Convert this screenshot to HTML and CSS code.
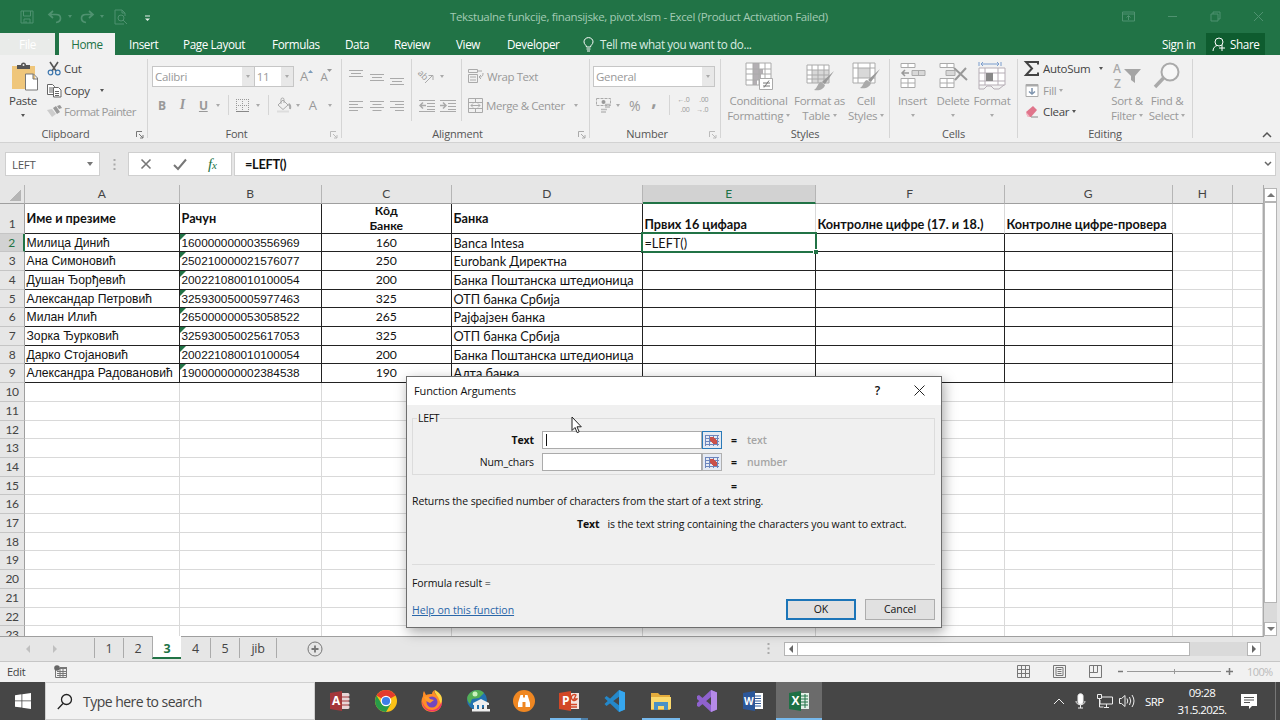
FILE: index.html
```html
<!DOCTYPE html>
<html lang="sr">
<head>
    <meta charset="UTF-8">
    <title>Tekstualne funkcije, finansijske, pivot.xlsm - Excel</title>
    <link rel="stylesheet" href="styles.css">
    <script src="script.js" defer></script>
</head>
<body>
<header class="titlebar">
    <div class="quick">
        <svg class="q-save" width="14" height="14" viewBox="0 0 14 14"><path d="M1 1h12v12H1zM3.500 1v5h7V1M4 13V9h6v4M6 13v-2"/></svg>
        <svg class="q-undo" width="14" height="14" viewBox="0 0 14 14"><path d="M5 1L1 4.500l4 3.500M1.500 4.500H8c6 0 6 7 0 8" stroke-width="1.700"/></svg>
        <i class="caret"></i>
        <svg class="q-redo" width="14" height="14" viewBox="0 0 14 14"><path d="M9 1l4 3.500L9 8M12.500 4.500H6c-6 0-6 7 0 8" stroke-width="1.700"/></svg>
        <i class="caret"></i>
        <svg class="q-preview" width="14" height="16" viewBox="0 0 14 16"><path d="M10 15H1V1h7l3 3v3M8 1v3h3"/><circle cx="7" cy="9" r="3"/><path d="M9 11l4 4"/></svg>
        <svg class="q-more" width="7" height="7" viewBox="0 0 7 7"><path d="M1 1h5"/><path d="M1 3.500h5L3.500 6z" class="solid"/></svg>
    </div>
    <div class="doc-title">Tekstualne funkcije, finansijske, pivot.xlsm - Excel (Product Activation Failed)</div>
    <div class="win-buttons">
        <svg width="13" height="11" viewBox="0 0 13 11"><path d="M.5 1h12v9H.5zM.5 3h12M6.500 9V5M4.500 6.500l2-2 2 2"/></svg>
        <svg width="11" height="11" viewBox="0 0 11 11"><path d="M1 5.500h9"/></svg>
        <svg width="11" height="11" viewBox="0 0 11 11"><path d="M1 3h7v7H1zM3 3V1h7v7H8"/></svg>
        <svg width="11" height="11" viewBox="0 0 11 11"><path d="M1 1l9 9M10 1l-9 9"/></svg>
    </div>
</header>

<nav class="tabs">
    <span class="tab-file">File</span>
    <span class="tab-home">Home</span>
    <span class="tab t-insert">Insert</span>
    <span class="tab t-layout">Page Layout</span>
    <span class="tab t-formulas">Formulas</span>
    <span class="tab t-data">Data</span>
    <span class="tab t-review">Review</span>
    <span class="tab t-view">View</span>
    <span class="tab t-dev">Developer</span>
    <span class="tell">
        <svg width="11" height="15" viewBox="0 0 11 15"><path d="M3.500 10c0-2-2.500-2.500-2.500-5.200a4.500 4.200 0 0 1 9 0C10 7.500 7.500 8 7.500 10zM3.500 12h4M4 14h3"/></svg>
        Tell me what you want to do...
    </span>
    <span class="signin">Sign in</span>
    <span class="share">
        <svg width="14" height="15" viewBox="0 0 14 15"><circle cx="7" cy="5" r="4"/><path d="M1 14c0-3 2-5 4-5.500M10 8v6M7 11h6"/></svg>
        Share
    </span>
</nav>

<section class="ribbon">
    <div class="group g-clipboard">
        <div class="group-body">
            <div class="paste">
                <svg width="28" height="29" viewBox="0 0 28 29"><path d="M1 4h23v23H1z" fill="#efc67b"/><path d="M6 3h4a2.500 2.500 0 0 1 5 0h4v4H6z" fill="#555"/><circle cx="12.500" cy="3" r="1" fill="#eee"/><path d="M14.500 12h8l4 4v12h-12zM22 12v5h5" fill="#fff" stroke="#777"/></svg>
                <span>Paste</span>
                <i class="caret dark"></i>
            </div>
            <div class="clip-list">
                <div class="tool on"><svg width="15" height="15" viewBox="0 0 15 15" fill="none"><path d="M3 1l6 9M11 1L5 10" stroke="#555" stroke-width="1.600"/><circle cx="3.500" cy="11.500" r="2.300" stroke="#3c76ae" stroke-width="1.200"/><circle cx="10.800" cy="11.500" r="2.300" stroke="#3c76ae" stroke-width="1.200"/></svg><span>Cut</span></div>
                <div class="tool on"><svg width="15" height="15" viewBox="0 0 15 15" fill="#fff" stroke="#666"><path d="M.5 1.500h5l2 2v8h-7zM2 5h4M2 7h4M2 9h4"/><path d="M6.500 4.500h5l2.500 2.500v7H6.500zM8 8.500h4M8 10.500h4M8 12.500h4"/></svg><span>Copy</span><i class="caret dark"></i></div>
                <div class="tool"><svg width="15" height="13" viewBox="0 0 15 13"><path d="M0 5l5-1 4 5-4 3z" fill="#ccc"/><path d="M6 3l3-2 4 6-3 2zM10 1l3-1 2 3-3 1z" fill="#999"/></svg><span class="s-painter">Format Painter</span></div>
            </div>
        </div>
        <div class="group-name">Clipboard<svg class="launch on" width="8" height="8" viewBox="0 0 8 8"><path d="M.5 6V.5H6M3 3l4 4M7 4v3H4"/></svg></div>
    </div>

    <div class="group g-font">
        <div class="group-body">
            <div class="font-row1">
                <span class="combo c-name">Calibri<b><i class="caret"></i></b></span>
                <span class="combo c-size">11<b><i class="caret"></i></b></span>
                <span class="grow">A<svg width="5" height="4" viewBox="0 0 5 4"><path d="M0 4h5L2.500 1z" fill="#7b9dbd"/></svg></span>
                <span class="grow small">A<svg width="5" height="4" viewBox="0 0 5 4"><path d="M0 0h5L2.500 3z" fill="#999"/></svg></span>
            </div>
            <div class="font-row2">
                <b class="f-b">B</b><i class="f-i">I</i><u class="f-u">U</u><i class="caret"></i><i class="vsep"></i>
                <svg class="f-border" width="13" height="13" viewBox="0 0 13 13"><path d="M.5 0v12M6.500 0v12M12.500 0v12M0 .5h13M0 6.500h13" stroke="#999" stroke-dasharray="1 1"/><path d="M0 12.500h13" stroke="#888"/></svg>
                <i class="caret"></i><i class="vsep v2"></i>
                <svg class="f-fill" width="16" height="15" viewBox="0 0 16 15" fill="none" stroke="#aaa"><path d="M7 2l5 5-5 4.500L2 7zM5 6V1.500a1.500 1.500 0 0 1 3 0V5"/><path d="M12.500 6c2 1 2 3 1.500 5" stroke-width="2"/><path d="M1 13.500h12" stroke="#ddd" stroke-width="2"/></svg>
                <i class="caret"></i><span class="f-a">A</span><i class="caret"></i>
            </div>
        </div>
        <div class="group-name">Font<svg class="launch" width="8" height="8" viewBox="0 0 8 8"><path d="M.5 6V.5H6M3 3l4 4M7 4v3H4"/></svg></div>
    </div>

    <div class="group g-align">
        <div class="group-body">
            <div class="al-grid">
                <svg width="14" height="18" viewBox="0 0 14 18"><path d="M0 2.500h14M2 5.500h10M0 8.500h14"/></svg>
                <svg width="14" height="18" viewBox="0 0 14 18"><path d="M0 6.500h14M2 9.500h10M0 12.500h14"/></svg>
                <svg width="14" height="18" viewBox="0 0 14 18"><path d="M0 10.500h14M2 13.500h10M0 16.500h14"/></svg>
                <svg width="14" height="14" viewBox="0 0 14 14"><path d="M0 2.500h14M0 5.500h9M0 8.500h14M0 11.500h9"/></svg>
                <svg width="14" height="14" viewBox="0 0 14 14"><path d="M0 2.500h14M2.500 5.500h9M0 8.500h14M2.500 11.500h9"/></svg>
                <svg width="14" height="14" viewBox="0 0 14 14"><path d="M0 2.500h14M5 5.500h9M0 8.500h14M5 11.500h9"/></svg>
            </div>
            <div class="al-grid al-mid">
                <svg width="16" height="16" viewBox="0 0 16 16"><text x="-1" y="9" transform="rotate(45 4 6)" class="ab">ab</text><path d="M6 14l7-7M9.500 6.500H14V11"/></svg>
                <i class="caret"></i>
                <svg width="16" height="14" viewBox="0 0 16 14"><path d="M0 1.500h16M8 4.500h8M8 7.500h8M8 10.500h8M0 12.500h16"/><path d="M7 6.500H1M4 3.500l-3 3 3 3" stroke-width="1.500"/></svg>
                <svg width="16" height="14" viewBox="0 0 16 14"><path d="M0 1.500h16M8 4.500h8M8 7.500h8M8 10.500h8M0 12.500h16"/><path d="M0 6.500h6M3 3.500l3 3-3 3" stroke-width="1.500"/></svg>
            </div>
            <div class="al-text">
                <div class="tool"><svg width="16" height="16" viewBox="0 0 16 16"><path d="M.5 1.500h9v3h-9zM9 3h5M.5 6.500h9v8h-9zM2 9h6M2 12h6M15 5c0 4-2 4-4 4M13 7l-2 2 2 2"/></svg><span class="s-wrap">Wrap Text</span></div>
                <div class="tool"><svg width="15" height="15" viewBox="0 0 15 15"><path d="M.5.5h14v14H.5zM.5 4.500h14M.5 10.500h14M7.500.5v4M7.500 10.500v4M3 7.500h9M5 5.500l-2 2 2 2M10 5.500l2 2-2 2"/></svg><span class="s-merge">Merge &amp; Center</span><i class="caret"></i></div>
            </div>
        </div>
        <div class="group-name">Alignment<svg class="launch" width="8" height="8" viewBox="0 0 8 8"><path d="M.5 6V.5H6M3 3l4 4M7 4v3H4"/></svg></div>
    </div>

    <div class="group g-number">
        <div class="group-body">
            <span class="combo c-format">General<b><i class="caret"></i></b></span>
            <div class="num-row">
                <svg width="16" height="16" viewBox="0 0 16 16"><path d="M.5 1.500h14v7H.5z" fill="none" stroke="#aaa" stroke-dasharray="3 1"/><circle cx="7.500" cy="5" r="2" fill="#999"/><path d="M9 7.500h5M9 10h5M5 12.500h6M5 15h5" stroke="#bbb" stroke-width="1.500"/></svg>
                <i class="caret"></i><span class="pct">%</span><span class="comma">,</span><i class="vsep"></i>
                <span class="dec">&#8592;.0<br>.00</span><span class="dec">.00<br>&#8594;.0</span>
            </div>
        </div>
        <div class="group-name">Number<svg class="launch" width="8" height="8" viewBox="0 0 8 8"><path d="M.5 6V.5H6M3 3l4 4M7 4v3H4"/></svg></div>
    </div>

    <div class="group g-styles">
        <div class="group-body">
            <div class="big b-cond"><svg width="28" height="29" viewBox="0 0 28 29"><path d="M1 1h25v22H1z" fill="#fff"/><path d="M8 1h6v6H8zM8 7h10v5H8zM8 12h8v6H8zM8 18h4v5H8z" fill="#b3afb3"/><path d="M1 1h25v22H1zM8 1v22M14 1v22M20 1v22M1 7h25M1 12h25M1 18h25" fill="none" stroke="#aaa"/><path d="M14.500 16.500h13v11h-13z" fill="#fff" stroke="#aaa"/><path d="M18 21h7M18 24h7M24 18.500l-5 7" stroke="#777"/></svg><span>Conditional<br>Formatting <i class="caret"></i></span></div>
            <div class="big b-table"><svg width="28" height="29" viewBox="0 0 28 29"><path d="M1 3h22v18H1z" fill="#fff"/><path d="M6 8h17v13H6z" fill="#d8d8d8"/><path d="M1 3h22v18H1zM6 3v18M12 3v18M18 3v18M1 8h22M1 13h22M1 17h22" fill="none" stroke="#aaa"/><path d="M28 9l-9 13-3-2z" fill="#999"/><path d="M15 20l4 3c-1 4-5 6-11 5 4-2 3-7 7-8z" fill="#aaa"/></svg><span>Format as<br>Table <i class="caret"></i></span></div>
            <div class="big b-cell"><svg width="28" height="29" viewBox="0 0 28 29"><path d="M1 1h22v20H1z" fill="#fff"/><path d="M6 6h12v10H6z" fill="#d8d8d8"/><path d="M1 1h22v20H1zM6 1v20M18 1v20M1 6h22M1 16h22" fill="none" stroke="#aaa"/><path d="M28 7l-9 13-3-2z" fill="#999"/><path d="M15 18l4 3c-1 4-5 6-11 5 4-2 3-7 7-8z" fill="#aaa"/></svg><span>Cell<br>Styles <i class="caret"></i></span></div>
        </div>
        <div class="group-name">Styles</div>
    </div>

    <div class="group g-cells">
        <div class="group-body">
            <div class="big b-ins"><svg width="28" height="29" viewBox="0 0 28 29" fill="#fff" stroke="#aaa"><path d="M2 1.500h14v4H2zM9 1.500v4M2 16.500h14v9H2zM9 16.500v9M2 21h14"/><path d="M13 8.500h13v5H13zM19.500 8.500v5" fill="#d8d8d8"/><path d="M10 11H3M6 8l-3 3 3 3" fill="none" stroke="#999" stroke-width="1.500"/></svg><span>Insert</span><i class="caret"></i></div>
            <div class="big b-del"><svg width="28" height="29" viewBox="0 0 28 29" fill="#fff" stroke="#aaa"><path d="M1 1.500h14v4H1zM8 1.500v4M1 16.500h14v9H1zM8 16.500v9M1 21h14"/><path d="M7 8.500h9v5H7z" fill="#d8d8d8"/><path d="M15 6l13 12M27 6L16 18" fill="none" stroke="#999" stroke-width="2"/></svg><span>Delete</span><i class="caret"></i></div>
            <div class="big b-fmt"><svg width="28" height="29" viewBox="0 0 28 29" fill="none" stroke="#b5adb5"><path d="M1 0v4M23 0v4M3 2h18M5 0L3 2l2 2M19 0l2 2-2 2" stroke="#7b9dcd"/><path d="M1 6h26v17H1zM7 6v17M20 6v17M1 11h26M1 19h26" fill="#fff"/><path d="M8 11h7v8H8z" fill="#888" stroke="none"/><path d="M1 23v4h5l3-3h4l3 3h5l5-4"/></svg><span>Format</span><i class="caret"></i></div>
        </div>
        <div class="group-name">Cells</div>
    </div>

    <div class="group g-editing">
        <div class="group-body">
            <div class="edit-list">
                <div class="tool on"><svg width="14" height="15" viewBox="0 0 14 15"><path d="M13 3.500V1H1l6 6.500L1 14h12v-2.500" fill="none" stroke="#444" stroke-width="2"/></svg><span class="s-sum">AutoSum</span><i class="caret dark"></i></div>
                <div class="tool"><svg width="14" height="15" viewBox="0 0 14 15"><path d="M1 1.500h12v12H1z" fill="#fff" stroke="#aaa"/><path d="M1 2.500h12" stroke="#aaa" stroke-width="2"/><path d="M7 5v6M4 8.500L7 11l3-2.500" fill="none" stroke="#7d93ad" stroke-width="1.500"/></svg><span class="s-fill">Fill</span><i class="caret"></i></div>
                <div class="tool on"><svg width="14" height="13" viewBox="0 0 14 13"><path d="M1 7l7-6 4 4-6 7H3z" fill="#e0758b"/><path d="M1 7l4 4.500-1 .5H3L1 9z" fill="#f3b8c4"/><path d="M6 12h7" stroke="#888"/></svg><span class="s-clear">Clear</span><i class="caret dark"></i></div>
            </div>
            <div class="big b-sort"><svg width="28" height="29" viewBox="0 0 28 29"><path d="M11 7h17l-6 7v7l-4-3v-4z" fill="#a5a5a5"/><text x="0" y="11" class="az">A</text><text x="1" y="26" class="az">Z</text></svg><span>Sort &amp;<br>Filter <i class="caret"></i></span></div>
            <div class="big b-find"><svg width="28" height="29" viewBox="0 0 28 29"><circle cx="17" cy="10" r="8.500" fill="#f7f7f7" stroke="#aaa" stroke-width="2"/><path d="M10.500 16L2 25" stroke="#aaa" stroke-width="3.500"/></svg><span>Find &amp;<br>Select <i class="caret"></i></span></div>
        </div>
        <div class="group-name">Editing</div>
    </div>
    <svg class="collapse" width="10" height="6" viewBox="0 0 10 6"><path d="M1 5l4-4 4 4"/></svg>
</section>

<section class="formula-bar">
    <div class="name-box">LEFT<i class="caret"></i></div>
    <svg class="grip" width="3" height="13" viewBox="0 0 3 13"><path d="M1.500 1v11"/></svg>
    <div class="fx-box">
        <svg width="12" height="12" viewBox="0 0 12 12"><path d="M1.500 1.500l9 9M10.500 1.500l-9 9" stroke-width="1.600"/></svg>
        <svg width="14" height="12" viewBox="0 0 14 12"><path d="M1 7l4 4 8-9.500" stroke-width="2"/></svg>
        <span class="fx">f<small>x</small></span>
    </div>
    <div class="formula">=LEFT()<svg width="8" height="6" viewBox="0 0 8 6"><path d="M1 1l3 3 3-3"/></svg></div>
</section>

<main class="workspace">
    <div class="sheet">
        <div class="row heads">
            <span class="corner"></span>
            <span>A</span><span>B</span><span>C</span><span>D</span><span class="active">E</span><span>F</span><span>G</span><span>H</span><span></span>
        </div>
        <div class="rows" id="rows"></div>
    </div>
    <div class="vscroll">
        <div class="sb-btn"><i class="tri up"></i></div>
        <div class="v-thumb"></div>
        <div class="v-track"></div>
        <div class="sb-btn"><i class="tri down"></i></div>
    </div>
</main>

<section class="sheet-tabs">
    <i class="tri left nav1"></i><i class="tri right nav2"></i>
    <div class="tab-list">
        <span>1</span><span>2</span><span class="current">3</span><span>4</span><span>5</span><span class="wide">jib</span>
    </div>
    <svg class="add" width="16" height="16" viewBox="0 0 16 16"><circle cx="8" cy="8" r="7"/><path d="M8 4.500v7M4.500 8h7" stroke-width="1.800"/></svg>
    <svg class="grip" width="3" height="13" viewBox="0 0 3 13"><path d="M1.500 1v11"/></svg>
    <div class="hscroll">
        <div class="sb-btn"><i class="tri left"></i></div>
        <div class="h-thumb"></div>
        <div class="h-track"></div>
        <div class="sb-btn"><i class="tri right"></i></div>
    </div>
</section>

<footer class="status">
    <span class="mode">Edit</span>
    <svg class="macro" width="14" height="13" viewBox="0 0 14 13"><path d="M1.500 3.500h11v9h-11zM3 6.500h9M3 8.500h9M3 10.500h9M6 4v8M9 4v8" fill="none" stroke="#777"/><circle cx="3" cy="3" r="2.800" fill="#666"/><path d="M6 3h7" stroke="#777" stroke-width="2"/></svg>
    <div class="views">
        <svg width="13" height="13" viewBox="0 0 13 13"><path d="M.5.5h12v12H.5zM4.500.5v12M8.500.5v12M.5 4.500h12M.5 8.500h12"/></svg>
        <svg width="13" height="13" viewBox="0 0 13 13"><path d="M.5.5h12v12H.5zM3 2.500h7v8H3zM4.500 4.500h4M4.500 6.500h4M4.500 8.500h4"/></svg>
        <svg width="13" height="13" viewBox="0 0 13 13"><path d="M.5.5h12v12H.5zM4.500.5v7M8.500.5v7M.5 7.500h8"/></svg>
    </div>
    <svg class="zoomer" width="116" height="9" viewBox="0 0 116 9"><path d="M1 4.500h5M109 4.500h7M112.500 1v7" stroke-width="1.500"/><path d="M10 4.500h94M57.500 2v5" stroke="#999"/></svg>
    <span class="zoom">100%</span>
</footer>

<section class="taskbar">
    <div class="start"><svg width="16" height="16" viewBox="0 0 16 16"><path d="M0 2.300l6.500-1v6.200H0zM7.300 1.200L16 0v7.500H7.300zM0 8.300h6.500v6.300L0 13.700zM7.300 8.300H16V16l-8.700-1.300z" fill="#fff"/></svg></div>
    <div class="search"><svg width="16" height="17" viewBox="0 0 16 17"><circle cx="9.500" cy="6.500" r="5"/><path d="M6 10.500L.8 16"/></svg><span>Type here to search</span></div>
    <div class="apps">
        <div><svg width="22" height="22" viewBox="0 0 22 22"><path d="M11 3h8c2 0 2 4 0 4 2 0 2 4 0 4 2 0 2 4 0 4 2 0 2 4 0 4h-8z" fill="#e8d5d6"/><path d="M12 7h8M12 11h8M12 15h8" stroke="#a4373a"/><path d="M1 3l12-2v20L1 19z" fill="#a4373a"/><text x="3" y="15" class="logo">A</text></svg></div>
        <div><svg width="22" height="22" viewBox="0 0 22 22"><circle cx="11" cy="11" r="11" fill="#fbc116"/><path d="M11 11L1.500 5.500A11 11 0 0 1 20.500 5.500z" fill="#e33b2e"/><path d="M1.500 5.500A11 11 0 0 0 11 22l5-8.500-5 2-4.500-2z" fill="#289b48"/><path d="M11 6h9.800L20.500 5.500H11z" fill="#e33b2e"/><circle cx="11" cy="11" r="5.300" fill="#fff"/><circle cx="11" cy="11" r="4.100" fill="#3d7ee8"/></svg></div>
        <div><svg width="22" height="22" viewBox="0 0 22 22"><path d="M14 0c-1 3 0 4 3 6l1-1c4 5 5 16-7 17C2 22-2 13 2 6c0-2 0-3 1-5l2 4c2-1 4-1 6-1 0-2 1-3 3-4z" fill="#ff8d26"/><path d="M1 11c1 15 21 13 20 0-2 5-5 9-10 9S3 17 1 11z" fill="#f0346a"/><path d="M14 0c-1 3 1 4 3 7l3 7c3-7-1-11-6-14z" fill="#ffd545"/><circle cx="11" cy="12" r="5.500" fill="#7447bd"/><path d="M3 7c3-1 5 0 6 2l4 1-4 3c-3-1-5-3-6-6z" fill="#ff9c2b"/></svg></div>
        <div><svg width="24" height="22" viewBox="0 0 24 22"><circle cx="11" cy="10" r="10" fill="#2272b0"/><path d="M3 4c4-5 12-5 15-1l-5 5-7 1-2 5C1 11 0 7 3 4z" fill="#54af55"/><circle cx="9" cy="4" r="2.500" fill="#c9f3bd"/><path d="M7 13l8-4 8 4v2H7zM8 15h3v5H8zM13 15h3v5h-3zM18 15h3v5h-3zM6 19h18v2.500H6z" fill="#eee"/></svg></div>
        <div><svg width="22" height="22" viewBox="0 0 22 22"><circle cx="11" cy="11" r="11" fill="#ef8722"/><path d="M7.500 5H10v2.500h2V5h2.500L17 13v4h-4.500v-5h-3v5H5v-4z" fill="#fff"/></svg></div>
        <div class="running stacked"><svg width="22" height="22" viewBox="0 0 22 22"><path d="M12 3h9v16h-9z" fill="#f4e3dc"/><path d="M13 14.500h6M13 17h6M18 5a3 3 0 1 0 1 4h-3z" fill="none" stroke="#d24726" stroke-width="1.300"/><path d="M1 3l12-2v20L1 19z" fill="#d24726"/><text x="4" y="15" class="logo">P</text></svg></div>
        <div><svg width="22" height="22" viewBox="0 0 22 22"><path d="M15 0l6 2.500v17L15 22 .5 8l2-2L16 16V6L2.500 16l-2-2z" fill="#2488ca"/><path d="M15 0l6 2.500v17L15 22z" fill="#36a6ee"/></svg></div>
        <div class="running"><svg width="22" height="20" viewBox="0 0 22 20"><path d="M1 2h7l2 2h10v15H1z" fill="#e4ac3c"/><path d="M1 6h20v12H1z" fill="#fbd96d"/><path d="M4 11h14v8h-4v-4H8v4H4z" fill="#4a91c5"/></svg></div>
        <div><svg width="22" height="22" viewBox="0 0 22 22"><path d="M15 0l6 2.500v17L15 22 1 9V6l2-1 12 10V7L3 17l-2-1v-3z" fill="#8f62ce"/><path d="M15 0l6 2.500v17L15 22z" fill="#b58ae8"/></svg></div>
        <div><svg width="22" height="22" viewBox="0 0 22 22"><path d="M12 3h9v16h-9z" fill="#fff"/><path d="M13 6h6M13 8.500h6M13 11h6M13 13.500h6M13 16h6" stroke="#2b579a"/><path d="M1 3l12-2v20L1 19z" fill="#2b579a"/><text x="2" y="15" class="logo w">W</text></svg></div>
        <div class="running current"><svg width="22" height="22" viewBox="0 0 22 22"><path d="M12 3h9v16h-9z" fill="#e4f0e8"/><path d="M13 6h7M13 9h7M13 12h7M13 15h7M17 4v14" stroke="#217346"/><path d="M1 3l12-2v20L1 19z" fill="#1e7145"/><text x="3.500" y="15" class="logo">X</text></svg></div>
    </div>
    <div class="tray">
        <svg class="t-up" width="12" height="7" viewBox="0 0 12 7"><path d="M1 6l5-5 5 5"/></svg>
        <svg class="t-mic" width="11" height="16" viewBox="0 0 11 16"><path d="M3 3c0-3 5-3 5 0v6c0 3-5 3-5 0z" fill="#fff"/><path d="M1 8c0 5 9 5 9 0M5.500 12v3M3 15h5"/></svg>
        <svg class="t-net" width="16" height="15" viewBox="0 0 16 15"><path d="M5 3h10.500v7H3V6M7 13.500h5M9.500 10v3M.5.500h4v4h-4zM2.500 5v8h4"/></svg>
        <svg class="t-vol" width="17" height="14" viewBox="0 0 17 14"><path d="M.5 4.500h2l3.500-3v11l-3.500-3h-2zM8 4.500q1.500 2.500 0 5M10.500 3q2.500 4 0 8M13 1q4 6 0 12"/></svg>
        <span class="lang">SRP</span>
        <div class="clock">09:28<br>31.5.2025.</div>
        <svg class="t-note" width="16" height="15" viewBox="0 0 16 15"><path d="M0 0h16v12h-5l-3 3v-3H0z" fill="#fff" stroke="none"/><path d="M3 3.500h10M3 6h10M3 8.500h6" stroke="#555"/></svg>
        <i class="peek"></i>
    </div>
</section>

<div class="dialog">
    <div class="dlg-title"><span>Function Arguments</span><b>?</b><svg width="11" height="11" viewBox="0 0 11 11"><path d="M.5.5l10 10M10.500.5l-10 10"/></svg></div>
    <div class="dlg-body">
        <fieldset class="args">
            <legend>LEFT</legend>
            <div class="arg focus"><label class="strong">Text</label><span class="field"><i class="cursor"></i></span><span class="pick"></span><b>=</b><span class="hint h-text">text</span></div>
            <div class="arg"><label class="l-num">Num_chars</label><span class="field"></span><span class="pick"></span><b>=</b><span class="hint h-num">number</span></div>
        </fieldset>
        <div class="result">=</div>
        <p class="about">Returns the specified number of characters from the start of a text string.</p>
        <p class="arg-about"><b>Text</b><span>is the text string containing the characters you want to extract.</span></p>
        <p class="formula-result">Formula result =</p>
        <div class="dlg-foot">
            <a class="help">Help on this function</a>
            <span class="btn ok">OK</span>
            <span class="btn">Cancel</span>
        </div>
    </div>
</div>
<svg class="pointer" width="12" height="18" viewBox="0 0 12 18"><path d="M1 1v13.500l3-3 2.200 5.200 2-.9L6 10.800h4.300z" fill="#fff" stroke="#222"/></svg>
</body>
</html>
```
FILE: styles.css
```css
* {
    box-sizing: border-box;
}

body {
    margin: 0;
    width: 1280px;
    height: 720px;
    overflow: hidden;
    position: relative;
    background: #e6e6e6;
    font-family: "Open Sans", "Noto Sans", sans-serif;
    font-size: 11.5px;
    letter-spacing: -0.3px;
    color: #444;
}

svg {
    display: block;
    flex: none;
    overflow: visible;
}

.caret {
    display: inline-block;
    flex: none;
    width: 0;
    height: 0;
    border: 2.5px solid transparent;
    border-top: 3px solid #aaa;
    border-bottom: 0;
}

.caret.dark {
    border-top-color: #555;
}

/* title bar */
.titlebar {
    height: 33px;
    display: flex;
    align-items: center;
    background: #217346;
}

.titlebar svg {
    fill: none;
    stroke: #4f9270;
}

.quick {
    width: 450px;
    padding-left: 20px;
    display: flex;
    align-items: center;
    height: 29px;
}

.quick .caret { border-top-color: #4f9270; }
.q-undo { margin-left: 14px; }
.q-undo + .caret { margin-left: 6px; }
.q-redo { margin-left: 8px; }
.q-redo + .caret { margin-left: 6px; }
.quick .q-preview { margin-left: 10px; }
.quick .q-more { margin: 3px 0 0 16px; stroke: #e5f0ea; }
.q-more .solid { fill: #e5f0ea; stroke: none; }

.doc-title {
    color: #a3cbb4;
    width: 672px;
    white-space: nowrap;
    font-size: 11.5px;
    letter-spacing: -0.35px;
}

.win-buttons {
    display: flex;
    gap: 32px;
    align-items: center;
    height: 29px;
}

/* ribbon tabs */
.tabs {
    height: 22px;
    display: flex;
    background: #217346;
    color: #fff;
    line-height: 22px;
    font-size: 11.7px;
    letter-spacing: -0.38px;
    white-space: nowrap;
}

.tab-file {
    width: 55px;
    background: #e9ebe9;
    text-align: center;
    color: #fff;
}

.tab-home {
    width: 56px;
    margin-left: 4px;
    background: #f1f1f1;
    color: #217346;
    text-align: center;
}

.t-insert { width: 54px; margin-left: 14px; }
.t-layout { width: 89px; }
.t-formulas { width: 73px; }
.t-data { width: 49px; }
.t-review { width: 62px; }
.t-view { width: 51px; }
.t-dev { width: 76px; }

.tell {
    width: 579px;
    display: flex;
    gap: 6px;
    align-items: center;
    color: #d9ebe1;
}

.tabs svg { fill: none; stroke: #fff; }

.signin { width: 44px; }

.share {
    display: flex;
    align-items: center;
    gap: 4px;
    background: #0e5c2f;
    width: 59px;
    padding-left: 6px;
}

/* ribbon */
.ribbon {
    height: 88px;
    display: flex;
    background: #f1f1f1;
    border-bottom: 1px solid #d2d2d2;
    color: #999;
}

.group {
    display: flex;
    flex-direction: column;
    margin: 4px 0;
    border-right: 1px solid #d5d5d5;
    flex: none;
}

.g-clipboard { width: 148px; }
.g-font { width: 194px; }
.g-align { width: 248px; }
.g-number { width: 131px; }
.g-styles { width: 169px; }
.g-cells { width: 128px; }
.g-editing { width: 175px; }

.group-body {
    height: 67px;
    display: flex;
    flex: none;
}

.group-name {
    position: relative;
    height: 12px;
    line-height: 16px;
    text-align: center;
    color: #555;
    font-size: 11px;
    letter-spacing: -0.2px;
    padding-right: 16px;
}

.g-styles .group-name, .g-cells .group-name, .g-editing .group-name {
    padding-right: 0;
}

.launch {
    position: absolute;
    right: 3px;
    top: 5px;
    fill: none;
    stroke: #bbb;
}

.launch.on { stroke: #777; }

.tool {
    display: flex;
    align-items: center;
    white-space: nowrap;
    height: 22px;
}

.tool.on { color: #444; }
.s-painter { letter-spacing: -0.6px; }

.paste {
    width: 46px;
    padding: 3px 0 0 0;
    display: flex;
    flex-direction: column;
    align-items: center;
    color: #444;
    line-height: 17px;
}

.paste svg { margin-left: 3px; }
.paste span { margin-top: 1px; }
.paste .caret { margin-top: 5px; }

.clip-list { padding: 0 0 0 1px; margin-top: -1px; }
.clip-list .tool { gap: 2px; height: 21.5px; }
.clip-list .caret { margin-left: 8px; }

.g-font .group-body, .g-number .group-body {
    flex-direction: column;
}

.combo {
    display: flex;
    align-items: center;
    justify-content: space-between;
    height: 21px;
    border: 1px solid #c6c6c6;
    background: #fff;
    padding-left: 2px;
    color: #999;
    line-height: 19px;
}

.combo b {
    width: 12px;
    align-self: stretch;
    background: #e8e8e8;
    display: flex;
    align-items: center;
    justify-content: center;
}

.c-name { width: 105px; }
.c-size { width: 41px; margin-left: -1px; }

.font-row1 {
    display: flex;
    padding: 7px 0 0 4px;
}

.grow {
    display: flex;
    width: 21px;
    margin-left: 6px;
    font-size: 13px;
    line-height: 21px;
}

.grow.small { font-size: 11.5px; margin-left: 0; }
.grow svg { margin-top: 3px; }

.font-row2 {
    display: flex;
    align-items: center;
    height: 22px;
    margin-top: 7px;
    padding-left: 10px;
    font-size: 12px;
}

.f-i { margin-left: 14px; font-family: "Liberation Serif", serif; font-size: 14px; font-weight: bold; }
.f-u { margin-left: 14px; font-weight: bold; }
.f-u + .caret { margin-left: 8px; }

.vsep {
    width: 1px;
    height: 20px;
    background: #d5d5d5;
    margin-left: 8px;
}

.f-border { margin-left: 7px; }
.f-border + .caret { margin-left: 7px; }
.f-fill { margin-left: 7px; }
.f-fill + .caret { margin-left: 4px; }
.f-a { margin: 0 11px 0 9px; font-size: 13px; }

/* alignment */
.g-align svg {
    fill: none;
    stroke: #aaa;
}

.al-grid {
    display: grid;
    grid-template-columns: 20.6px 20.6px 20.6px;
    grid-template-rows: 29px 29px;
    align-items: center;
    padding: 3px 0 0 7px;
    width: 69px;
    height: 62px;
}

.al-mid {
    grid-template-columns: 21px 21px;
    width: 51px;
    margin-left: 0;
    padding-left: 7px;
    border: solid #d5d5d5;
    border-width: 0 1px;
}

.ab {
    font-size: 9px;
    fill: #999;
    stroke: none;
}

.al-text { padding: 6px 0 0 6px; }
.al-text .tool { gap: 3px; height: 22px; }
.al-text .tool + .tool { margin-top: 7px; }
.s-wrap, .s-merge { letter-spacing: -0.42px; }
.al-text .caret { margin-left: 6px; }

/* number */
.c-format { width: 122px; margin: 7px 0 0 3px; flex: none; }

.num-row {
    display: flex;
    align-items: center;
    padding-left: 6px;
    margin-top: 7px;
    height: 22px;
}

.num-row .caret { margin-left: 4px; }
.pct { margin-left: 9px; font-size: 14px; }
.comma { margin-left: 11px; font-size: 19px; line-height: 10px; font-weight: bold; margin-top: -13px; }
.num-row .vsep { margin-left: 13px; }
.dec { font-size: 7px; line-height: 10px; margin-left: 7px; text-align: right; }

/* large buttons */
.big {
    display: flex;
    flex-direction: column;
    align-items: center;
    text-align: center;
    line-height: 15px;
    padding-top: 3px;
    white-space: nowrap;
}

.big span { margin-top: 2px; }
.big .caret { vertical-align: 3px; }
.big > .caret { margin-top: 6px; }
.b-cond { width: 75px; }
.b-table { width: 47px; }
.b-cell { width: 46px; }
.b-ins { width: 45px; }
.b-del { width: 36px; }
.b-fmt { width: 42px; }
.b-sort { width: 42px; }
.b-find { width: 38px; }

.edit-list { width: 88px; padding-left: 7px; margin-top: -1px; }
.edit-list .tool { gap: 4px; height: 21.5px; }
.s-sum { width: 52px; }
.edit-list .s-fill + .caret, .edit-list .s-clear + .caret { margin-left: -1px; }
.az { font-size: 12px; fill: #aaa; font-weight: 600; }

.collapse {
    margin: 77px 0 0 69px;
    fill: none;
    stroke: #555;
    stroke-width: 1.5;
}

/* formula bar */
.formula-bar {
    height: 42px;
    display: flex;
    padding: 9px 4px 0 5px;
    align-items: flex-start;
}

.formula-bar > div {
    height: 24px;
    border: 1px solid #cfcfcf;
    background: #fff;
    display: flex;
    align-items: center;
}

.formula-bar > .name-box {
    width: 95px;
    padding: 0 6px;
    justify-content: space-between;
    font-size: 11.5px;
    color: #555;
}

.name-box .caret { border-width: 4px 3.5px 0; border-top-color: #777; }

.grip {
    margin: 6px 0 0 13px;
    stroke: #aaa;
    stroke-width: 2;
    stroke-dasharray: 2 2.500;
}

.formula-bar > .fx-box {
    width: 104px;
    margin-left: 12px;
    padding-left: 11px;
    gap: 21px;
}

.fx-box svg { fill: none; stroke: #777; }
.fx { font: italic 15px "Liberation Serif", serif; color: #217346; }
.fx small { font-size: 11px; }

.formula-bar > .formula {
    flex: 1;
    margin-left: 2px;
    padding: 0 3px 0 10px;
    justify-content: space-between;
    font: bold 12.8px Lato, sans-serif;
    color: #111;
}

.formula svg { fill: none; stroke: #666; stroke-width: 1.5; }

/* sheet */
.workspace {
    height: 451px;
    display: flex;
}

.sheet {
    width: 1264px;
    height: 452px;
    overflow: hidden;
    border-right: 1px solid #aaa;
    border-bottom: 1px solid #9f9f9f;
    font-family: Lato, "Open Sans", sans-serif;
    font-size: 12.7px;
    letter-spacing: 0;
    color: #111;
    flex: none;
}

.row {
    display: grid;
    grid-template-columns: 25px 155px 142px 130px 191px 173px 189px 168px 60px 30px;
    grid-template-rows: 100%;
    height: 18.71px;
    background: #fff;
}

.row > * {
    border-right: 1px solid #d9d9d9;
    border-bottom: 1px solid #d9d9d9;
    padding: 0 2px 0 1.5px;
    white-space: nowrap;
    line-height: 18px;
    position: relative;
}

.heads {
    height: 19px;
    background: #e6e6e6;
    text-align: center;
    font-size: 12px;
    color: #444;
}

.heads > * {
    border-right-color: #b5b5b5;
    border-bottom-color: #9f9f9f;
}

.heads > .active {
    background: #d2d2d2;
    color: #217346;
    border-bottom: 2px solid #217346;
}

.heads > :last-child { border-right: 0; }

.corner {
    background: linear-gradient(135deg, transparent 50%, #b5b5b5 50%) 10px 5px / 11px 11px no-repeat;
}

.row > .num {
    background: #e6e6e6;
    text-align: center;
    color: #444;
    font-size: 12px;
    letter-spacing: -0.4px;
    border-right-color: #9f9f9f;
    border-bottom-color: #c5c5c5;
    padding: 0;
}

.row > .num.sel {
    background: #d2d2d2;
    color: #217346;
    border-right: 2px solid #217346;
}

.row.first { height: 29.5px; font-weight: bold; }
.first > .num { font-weight: normal; line-height: 40px; }
.first > .a, .first > .b, .first > .d { line-height: 29px; }
.first > .c { line-height: 14.5px; white-space: pre-line; }
.first > .e, .first > .f, .first > .g { line-height: 41px; }

.row > .box { border-color: #222; }
.first > .e, .first > .f, .first > .g { border-bottom-color: #222; }

.a { font-family: "Liberation Sans", sans-serif; font-size: 12.2px; }
.b { font-family: "Liberation Sans", sans-serif; font-size: 11.8px; }
.first > .a, .first > .b { font-family: Lato, sans-serif; font-size: 12.7px; }
.c { text-align: center; font-size: 12.2px; }

.flag::before {
    content: "";
    position: absolute;
    left: 0;
    top: 0;
    border: 3px solid transparent;
    border-top-color: #217346;
    border-left-color: #217346;
}

.picked::after {
    content: "";
    position: absolute;
    inset: -2px -2px -2px -2px;
    border: 2px solid #217346;
}

.picked > i {
    position: absolute;
    right: -3px;
    bottom: -3px;
    width: 5px;
    height: 5px;
    background: #217346;
    border: solid #fff;
    border-width: 1px 0 0 1px;
    z-index: 1;
}

.tri {
    width: 0;
    height: 0;
    border: 4px solid transparent;
}

.tri.up { border-bottom-color: #777; border-top: 0; }
.tri.down { border-top-color: #777; border-bottom: 0; }
.tri.left { border-right-color: #666; border-left: 0; }
.tri.right { border-left-color: #666; border-right: 0; }

.sb-btn {
    width: 14px;
    height: 14px;
    border: 1px solid #b5b5b5;
    background: #fff;
    display: flex;
    align-items: center;
    justify-content: center;
    flex: none;
}

.vscroll {
    width: 13px;
    margin: 3px 0 0 0;
    display: flex;
    flex-direction: column;
}

.vscroll .sb-btn { width: 13px; }
.v-thumb { height: 401px; border: 1px solid #b5b5b5; background: #fff; }
.v-track { height: 19px; background: #dadada; }

/* sheet tabs */
.sheet-tabs {
    height: 26px;
    display: flex;
    position: relative;
    align-items: center;
    border-bottom: 1px solid #c6c6c6;
    font-size: 12.5px;
}

.nav1 { margin-left: 26px; }
.nav2 { margin-left: 23px; }
.sheet-tabs > .nav1 { border-right-color: #c0c0c0; }
.sheet-tabs > .nav2 { border-left-color: #c0c0c0; }

.tab-list {
    display: flex;
    margin-left: 37px;
    height: 25px;
    align-items: flex-start;
    padding-top: 2px;
}

.tab-list span {
    width: 29px;
    height: 20px;
    line-height: 21px;
    text-align: center;
    border-left: 1px solid #ababab;
}

.tab-list .wide { width: 38px; border-right: 1px solid #ababab; }

.tab-list .current {
    height: 23px;
    margin-top: -2px;
    line-height: 25px;
    background: #fff;
    color: #217346;
    font-weight: bold;
    border-bottom: 2px solid #217346;
}

.tab-list .current + span { border-left: 0; }

.add { margin-left: 30px; fill: none; stroke: #777; }
.sheet-tabs .grip { margin: 0 0 0 444px; }

.hscroll { display: flex; margin-left: 14px; }
.h-thumb { width: 393px; height: 14px; border: 1px solid #b5b5b5; margin-left: -1px; background: #fff; }
.h-track { width: 57px; background: #dadada; }

/* status bar */
.status {
    height: 20px;
    display: flex;
    align-items: center;
    background: #f1f1f1;
    font-size: 11px;
    padding-bottom: 2px;
}

.mode { width: 46px; padding-left: 7px; }
.macro { margin-left: 8px; }

.views {
    display: flex;
    gap: 23px;
    margin-left: 949px;
    fill: none;
    stroke: #777;
}

.zoomer { margin-left: 15px; stroke: #777; }
.zoom { margin-left: 14px; color: #bbb; letter-spacing: -0.6px; }

/* taskbar */
.taskbar {
    height: 38px;
    display: flex;
    background: #464646;
    color: #fff;
}

.start {
    width: 45px;
    display: flex;
    align-items: center;
    justify-content: center;
}

.search {
    width: 270px;
    background: #f2f2f2;
    border: 1px solid #d0d0d0;
    color: #444;
    display: flex;
    align-items: center;
    padding-left: 11px;
    gap: 10px;
    font-size: 14px;
    letter-spacing: -0.53px;
}

.search svg { fill: none; stroke: #222; stroke-width: 1.3; }

.apps {
    display: flex;
    width: 507px;
    margin-left: 2px;
}

.apps > div {
    width: 45.9px;
    display: flex;
    align-items: center;
    justify-content: center;
    position: relative;
}

.apps .current { background: #6b6b6b; }

.running::after {
    content: "";
    position: absolute;
    left: 4px;
    right: 4px;
    bottom: 0;
    height: 2px;
    background: #76b9ed;
}

.current.running::after { left: 0; right: 0; }
.stacked::after { border-right: 7px solid #4d7fa8; }

.logo {
    font: bold 12px "Open Sans", sans-serif;
    fill: #fff;
}

.logo.w { font-size: 10px; }

.tray {
    flex: 1;
    display: flex;
    align-items: center;
    padding-left: 229px;
    font-size: 11.5px;
}

.tray svg { fill: none; stroke: #eee; }
.t-mic { margin-left: 10px; }
.t-net { margin-left: 11px; }
.t-vol { margin-left: 6px; }
.lang { width: 29px; margin-left: 9px; letter-spacing: -0.6px; }

.clock {
    width: 56px;
    line-height: 17px;
    text-align: center;
    letter-spacing: -0.6px;
    padding-bottom: 1px;
}

.t-note { margin-left: 11px; }
.peek { width: 1px; align-self: stretch; margin-left: 18px; background: #777; }

/* dialog */
.dialog {
    position: absolute;
    left: 406px;
    top: 376px;
    width: 536px;
    height: 252px;
    background: #f0f0f0;
    border: 1px solid #6e6e6e;
    box-shadow: 2px 4px 12px rgba(0, 0, 0, 0.35);
    color: #111;
    font-size: 10.5px;
    letter-spacing: -0.1px;
}

.dlg-title {
    height: 28px;
    background: #fff;
    display: flex;
    align-items: center;
    padding: 0 16px 2px 7px;
}

.dlg-title span { flex: 1; font-size: 11px; }
.dlg-title b { margin-right: 34px; font-size: 12px; font-weight: 600; }
.dlg-title svg { stroke: #222; }

.dlg-body { padding: 7px 6px 0 5px; }

.args {
    margin: 0;
    height: 63px;
    border: 1px solid #dcdcdc;
    padding: 6px 0 0;
}

.args legend {
    margin-left: 4px;
    padding: 0 1px;
    line-height: 13px;
    height: 13px;
    letter-spacing: -0.3px;
}

.arg {
    display: flex;
    height: 18px;
    margin-bottom: 3.5px;
    align-items: center;
}

.arg label {
    width: 121px;
    text-align: right;
    margin-right: 8px;
    flex: none;
}

.strong { font-weight: bold; }

.field {
    width: 160px;
    height: 18px;
    border: 1px solid #ababab;
    background: #fff;
    padding: 2px 3px;
}

.cursor {
    display: block;
    width: 1px;
    height: 12px;
    background: #111;
}

.pick {
    width: 20px;
    height: 18px;
    border: 1px solid #b0b0b0;
    background:
        linear-gradient(45deg, transparent 25%, #c9504a 25%, #c9504a 75%, transparent 75%) 7px 5px / 7px 7px no-repeat,
        repeating-linear-gradient(#6d86bd 0 1px, transparent 1px 3px) 2px 3px / 14px 11px no-repeat,
        repeating-linear-gradient(90deg, #6d86bd 0 1px, transparent 1px 4px) 2px 3px / 14px 11px no-repeat,
        #e5eaf3;
}

.focus .pick { border: 1.5px solid #2a7ab8; }
.arg b { width: 25px; padding-left: 9px; }
.hint { color: #a5a5a5; font-weight: 600; }

.result { margin: 4px 0 0 319px; font-weight: bold; line-height: 14px; }

.about, .arg-about, .formula-result {
    margin: 0;
    line-height: 15px;
    white-space: nowrap;
}

.about { margin-top: 1px; }

.arg-about {
    display: flex;
    margin: 8px 0 0 165px;
    gap: 8px;
}

.formula-result {
    margin-top: 32px;
    border-top: 1px solid #dcdcdc;
    padding-top: 11px;
}

.dlg-foot {
    display: flex;
    align-items: center;
    margin-top: 8px;
}

.help {
    flex: 1;
    color: #2a66a8;
    text-decoration: underline;
    letter-spacing: 0;
}

.btn {
    width: 70px;
    height: 21px;
    margin-left: 9px;
    border: 1px solid #adadad;
    background: #e1e1e1;
    text-align: center;
    line-height: 19px;
}

.btn.ok { border: 2px solid #1c75b8; line-height: 17px; }

.pointer {
    position: absolute;
    left: 571px;
    top: 416px;
}
```
FILE: script.js
```js
// Подаци за радни лист: редови 1-9, остало је празно
const data = [
    ["Име и презиме", "Рачун", "Кôд\nБанке", "Банка", "Првих 16 цифара", "Контролне цифре (17. и 18.)", "Контролне цифре-провера"],
    ["Милица Динић", "160000000003556969", "160", "Banca Intesa", "=LEFT()"],
    ["Ана Симоновић", "250210000021576077", "250", "Eurobank Директна"],
    ["Душан Ђорђевић", "200221080010100054", "200", "Банка Поштанска штедионица"],
    ["Александар Петровић", "325930050005977463", "325", "ОТП банка Србија"],
    ["Милан Илић", "265000000053058522", "265", "Рајфајзен банка"],
    ["Зорка Ђурковић", "325930050025617053", "325", "ОТП банка Србија"],
    ["Дарко Стојановић", "200221080010100054", "200", "Банка Поштанска штедионица"],
    ["Александра Радовановић", "190000000002384538", "190", "Алта банка"]
];
const letters = "abcdefghi";

function addRow(n) {
    const row = document.createElement("div");
    row.className = n === 1 ? "row first" : "row";

    const num = document.createElement("span");
    num.className = n === 2 ? "num sel" : "num";
    num.textContent = n;
    row.appendChild(num);

    for (let i = 0; i < letters.length; i++) {
        const cell = document.createElement("span");
        cell.className = letters[i];
        cell.textContent = (data[n - 1] || [])[i] || "";
        // црне ивице око табеле
        if (n <= 9 && (i < 4 || (i < 7 && n > 1))) cell.classList.add("box");
        if (i === 1 && n > 1 && n <= 9) cell.classList.add("flag");
        if (i === 4 && n === 2) {
            cell.classList.add("picked");
            cell.appendChild(document.createElement("i"));
        }
        row.appendChild(cell);
    }
    document.getElementById("rows").appendChild(row);
}

for (let n = 1; n <= 23; n++) addRow(n);
```
